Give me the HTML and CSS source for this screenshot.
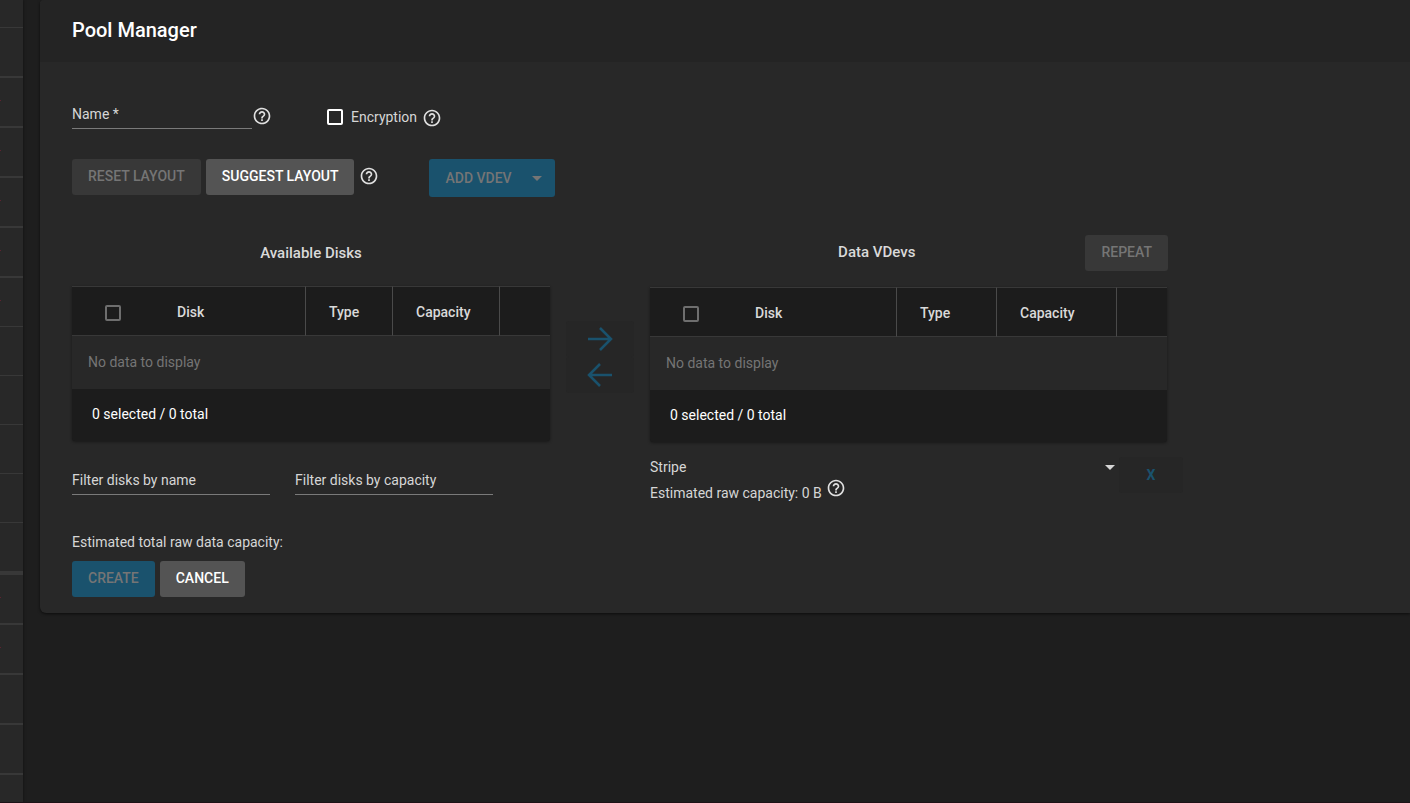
FILE: index.html
```html
<!DOCTYPE html>
<html lang="en">
<head>
  <meta charset="UTF-8">
  <title>Pool Manager</title>
  <meta name="viewport" content="width=device-width, initial-scale=1">
  <link rel="stylesheet" href="styles.css">
</head>
<body>
  <svg class="sprite" aria-hidden="true">
    <symbol id="help" viewBox="0 0 24 24">
      <path d="M11 18h2v-2h-2v2zm1-16C6.480 2 2 6.480 2 12s4.480 10 10 10 10-4.480 10-10S17.520 2 12 2zm0 18c-4.410 0-8-3.590-8-8s3.590-8 8-8 8 3.590 8 8-3.590 8-8 8zm0-14c-2.210 0-4 1.790-4 4h2c0-1.100.9-2 2-2s2 .9 2 2c0 2-3 1.750-3 5h2c0-2.250 3-2.500 3-5 0-2.210-1.790-4-4-4z"/>
    </symbol>
    <symbol id="arrow" viewBox="0 0 26 26">
      <path d="M1 13h22M13 2l11 11-11 11" fill="none" stroke="currentColor" stroke-width="2.500"/>
    </symbol>
  </svg>

  <div class="app">
    <nav class="sidenav">
      <ul>
        <li class="thin first"></li>
        <li></li>
        <li class="sub"></li>
        <li class="sub"></li>
        <li class="sub"></li>
        <li class="sub"></li>
        <li class="thin sub"></li>
        <li class="thin"></li>
        <li class="thin"></li>
        <li class="thin"></li>
        <li class="thin"></li>
        <li class="thick"></li>
        <li class="sub"></li>
        <li class="sub"></li>
        <li></li>
        <li></li>
      </ul>
    </nav>

    <main class="card">
      <h1 class="card-title">Pool Manager</h1>

      <form class="card-body">
        <div class="name-row">
          <input class="field name-field" type="text" placeholder="Name *" aria-label="Name">
          <svg class="help"><use href="#help"/></svg>
          <label class="encryption"><input type="checkbox"> Encryption</label>
          <svg class="help"><use href="#help"/></svg>
        </div>

        <div class="button-row">
          <button class="btn" type="button" disabled>RESET LAYOUT</button>
          <button class="btn" type="button">SUGGEST LAYOUT</button>
          <svg class="help"><use href="#help"/></svg>
          <button class="btn primary add-vdev" type="button" disabled>ADD VDEV <i class="caret"></i></button>
        </div>

        <div class="layout">
          <section class="disks">
            <h2 class="section-title">Available Disks</h2>
            <table class="disk-table">
              <colgroup><col class="c-check"><col><col class="c-type"><col class="c-cap"><col class="c-more"></colgroup>
              <thead>
                <tr>
                  <th><input type="checkbox" aria-label="Select all available disks"></th>
                  <th>Disk</th>
                  <th>Type</th>
                  <th>Capacity</th>
                  <th></th>
                </tr>
              </thead>
              <tbody>
                <tr><td colspan="5">No data to display</td></tr>
              </tbody>
              <tfoot>
                <tr><td colspan="5">0 selected / 0 total</td></tr>
              </tfoot>
            </table>
            <div class="filters">
              <input class="field" type="text" placeholder="Filter disks by name" aria-label="Filter disks by name">
              <input class="field" type="text" placeholder="Filter disks by capacity" aria-label="Filter disks by capacity">
            </div>
          </section>

          <div class="move">
            <button class="flat" type="button" disabled aria-label="Add to vdev"><svg><use href="#arrow"/></svg></button>
            <button class="flat back" type="button" disabled aria-label="Remove from vdev"><svg><use href="#arrow"/></svg></button>
          </div>

          <section class="vdevs">
            <div class="vdev-head">
              <h2 class="section-title">Data VDevs</h2>
              <button class="btn" type="button" disabled>REPEAT</button>
            </div>
            <table class="disk-table wide">
              <colgroup><col class="c-check"><col><col class="c-type"><col class="c-cap"><col class="c-more"></colgroup>
              <thead>
                <tr>
                  <th><input type="checkbox" aria-label="Select all vdev disks"></th>
                  <th>Disk</th>
                  <th>Type</th>
                  <th>Capacity</th>
                  <th></th>
                </tr>
              </thead>
              <tbody>
                <tr><td colspan="5">No data to display</td></tr>
              </tbody>
              <tfoot>
                <tr><td colspan="5">0 selected / 0 total</td></tr>
              </tfoot>
            </table>
            <div class="vdev-foot">
              <div class="vdev-type">
                <div class="select-wrap">
                  <select aria-label="Vdev type">
                    <option>Stripe</option>
                  </select>
                  <i class="caret"></i>
                </div>
                <p class="raw">Estimated raw capacity: 0 B <svg class="help"><use href="#help"/></svg></p>
              </div>
              <button class="flat" type="button" disabled>X</button>
            </div>
          </section>
        </div>

        <p class="total">Estimated total raw data capacity:</p>
        <div class="actions">
          <button class="btn primary" type="submit" disabled>CREATE</button>
          <button class="btn" type="button">CANCEL</button>
        </div>
      </form>
    </main>
  </div>
</body>
</html>
```
FILE: styles.css
```css
* {
  box-sizing: border-box;
}
body {
  margin: 0;
  background: #1e1e1e;
  color: #d6d6d6;
  font-family: Roboto, "Liberation Sans", sans-serif;
  font-size: 14px;
  line-height: 20px;
}
h1, h2, p, ul {
  margin: 0;
  padding: 0;
}
input, select, button {
  font: inherit;
  color: inherit;
  margin: 0;
}
.sprite {
  position: absolute;
  width: 0;
  height: 0;
}
.app {
  display: flex;
  align-items: flex-start;
  min-height: 100vh;
  border-bottom: 1px solid #1d1217;
  overflow: hidden;
}

/* Side navigation */
.sidenav {
  width: 23px;
  align-self: stretch;
  flex: none;
  margin-right: 17px;
  background: #282828;
  box-shadow: 0 0 3px rgba(0,0,0,0.5);
  overflow: hidden;
}
.sidenav ul {
  list-style: none;
}
.sidenav li {
  height: 50px;
  padding-top: 22px;
  border-bottom: 2px solid #383838;
}
.sidenav .thin {
  height: 49px;
  border-bottom-width: 1px;
}
.sidenav .first {
  height: 28px;
}
.sidenav .thick {
  height: 52px;
  border-bottom-width: 4px;
}
.sub::before {
  content: "";
  display: block;
  width: 1px;
  height: 1px;
  background: #5e2230;
}

/* Card */
.card {
  flex: 1;
  min-width: 0;
  background: #282828;
  border-radius: 4px 0 0 6px;
  box-shadow: 0 1px 3px rgba(0,0,0,0.6);
}
.card-title {
  padding: 18px 32px 20px;
  background: #242424;
  border-radius: 4px 0 0 0;
  color: #fff;
  font-size: 20px;
  line-height: 24px;
  font-weight: 500;
}
.card-body {
  padding: 40px 32px 16px;
}
.help {
  width: 20px;
  height: 20px;
  flex: none;
  fill: #e0e0e0;
}
.field {
  min-width: 0;
  height: 27px;
  padding: 0 0 2px;
  border: 0;
  border-bottom: 1px solid #7a7a7a;
  border-radius: 0;
  background: none;
}
.field::placeholder {
  color: #d6d6d6;
  opacity: 1;
}
input[type="checkbox"] {
  appearance: none;
  width: 16px;
  height: 16px;
  border: 2px solid #6e6e6e;
  border-radius: 2px;
  vertical-align: middle;
}
.name-row {
  display: flex;
  align-items: center;
  height: 27px;
}
.name-field {
  width: 180px;
}
.encryption {
  display: flex;
  align-items: center;
  gap: 8px;
  margin: 2px 5px 0 55px;
}
.encryption input {
  border-color: #fff;
}
.encryption + .help {
  margin-top: 4px;
}

/* Buttons */
.btn {
  height: 36px;
  padding: 0 16px 2px;
  border: 0;
  border-radius: 3px;
  background: #545454;
  color: #fff;
  font-weight: 500;
  white-space: nowrap;
}
.btn:disabled {
  background: #383838;
  color: #757575;
}
.btn.primary:disabled {
  background: #1a526d;
}
.button-row {
  display: flex;
  align-items: flex-start;
  gap: 5px;
  margin-top: 30px;
}
.button-row .help {
  margin-top: 7px;
}
.add-vdev {
  display: flex;
  align-items: center;
  gap: 20px;
  height: 38px;
  margin-left: 45px;
  padding: 0 13px 0 16px;
}
.caret {
  flex: none;
  border: 5px solid transparent;
  border-top-color: currentColor;
  border-bottom: 0;
}
.flat {
  width: 64px;
  height: 36px;
  padding: 0;
  border: 0;
  border-radius: 3px;
  background: #262626;
  color: #1a526d;
  font-weight: 700;
}

/* Disk layout */
.layout {
  display: flex;
  margin-top: 38px;
}
.disks {
  flex: 0 1 478px;
}
.section-title {
  flex: 1;
  color: #d9d9d9;
  font-size: 15px;
  line-height: 36px;
  font-weight: 500;
  text-align: center;
}
.disks .section-title {
  margin-bottom: 15px;
}
.disk-table {
  width: 100%;
  border-collapse: separate;
  border-spacing: 0;
  table-layout: fixed;
  border-radius: 0 0 3px 3px;
  background: #1c1c1c;
  box-shadow: 0 1px 3px rgba(0,0,0,0.4);
}
.c-check {
  width: 82px;
}
.c-type {
  width: 87px;
}
.c-cap {
  width: 107px;
}
.c-more {
  width: 50px;
}
.wide .c-type {
  width: 100px;
}
.wide .c-cap {
  width: 120px;
}
.disk-table th {
  height: 50px;
  padding: 2px 23px 0;
  border-top: 1px solid #383838;
  border-bottom: 1px solid #383838;
  border-right: 1px solid #4a4a4a;
  font-weight: 500;
  text-align: left;
  color: #d9d9d9;
}
.disk-table th:first-child {
  padding: 2px 0 0 33px;
  border-right: 0;
}
.disk-table th:last-child {
  border-right: 0;
}
.disk-table tbody td {
  height: 53px;
  padding: 0 16px 2px;
  background: #282828;
  color: #757575;
}
.disk-table tfoot td {
  height: 52px;
  padding: 0 20px 2px;
  color: #fff;
}
.filters {
  display: flex;
  gap: 25px;
  margin-top: 27px;
}
.filters .field {
  flex: 0 1 198px;
}

.move {
  display: flex;
  flex-direction: column;
  margin: 86px 16px 0;
}
.move .flat {
  width: 68px;
}
.move svg {
  width: 26px;
  height: 26px;
  vertical-align: middle;
}
.back svg {
  transform: scaleX(-1);
}

.vdevs {
  flex: 0 1 533px;
}
.vdev-head {
  display: flex;
  align-items: flex-start;
  margin: 0 15px 16px 0;
}
.vdev-head .section-title {
  padding-left: 18px;
  line-height: 34px;
}
.vdevs .disk-table {
  width: calc(100% - 16px);
}
.vdev-foot {
  display: flex;
  align-items: flex-start;
  margin-top: 15px;
}
.vdev-type {
  flex: 1;
}
.vdev-foot .flat {
  flex: none;
}
.select-wrap {
  display: flex;
  align-items: center;
  padding-right: 4px;
}
.select-wrap select {
  flex: 1;
  height: 20px;
  padding: 0;
  border: 0;
  background: none;
  appearance: none;
}
.raw {
  display: flex;
  gap: 4px;
  padding-top: 6px;
}
.raw .help {
  margin-top: -5px;
}
.total {
  margin-top: 29px;
}
.actions {
  display: flex;
  gap: 5px;
  margin-top: 9px;
}
```
